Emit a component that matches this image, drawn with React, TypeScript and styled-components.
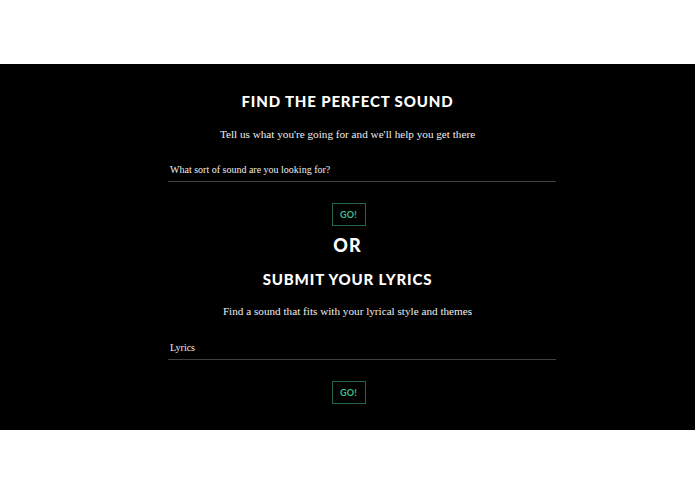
import React from "react";
import styled, { createGlobalStyle } from "styled-components";

const Global = createGlobalStyle`
  html, body { margin: 0; padding: 0; background: #fff; }
  body { width: 695px; height: 494px; overflow: hidden; }
`;

const Page = styled.div`
  padding-top: 64px;
  height: 494px;
  box-sizing: border-box;
`;

const Band = styled.section`
  background: #000;
  height: 366px;
  display: flex;
  flex-direction: column;
  align-items: center;
  padding-top: 28px;
  box-sizing: border-box;
`;

const Heading = styled.h2<{ $mt: number }>`
  margin: ${(p) => p.$mt}px 0 0;
  font-family: "Lato", "Open Sans", sans-serif;
  font-weight: 900;
  font-size: 15px;
  letter-spacing: 0.85px;
  line-height: 18px;
  color: #fff;
  height: 18px;
  display: flex;
  align-items: center;
`;

const Or = styled(Heading)`
  font-size: 18px;
  letter-spacing: 1px;
`;

const Sub = styled.p<{ $mt: number }>`
  margin: ${(p) => p.$mt}px 0 0;
  font-family: "Liberation Serif", "DejaVu Serif", serif;
  font-size: 11.2px;
  line-height: 14px;
  color: #eee;
`;

const Field = styled.div<{ $mt: number }>`
  margin-top: ${(p) => p.$mt}px;
  margin-left: 29px;
  width: 388px;
  border-bottom: 1px solid #404040;
  padding: 0 2px 5px;
  box-sizing: border-box;
  font-family: "Liberation Serif", "DejaVu Serif", serif;
  font-size: 10px;
  line-height: 12px;
  color: #eee;
`;

const Go = styled.button<{ $mt: number }>`
  margin-top: ${(p) => p.$mt}px;
  margin-left: 2px;
  width: 34px;
  height: 23px;
  background: #000;
  border: 1px solid #23664b;
  color: #3fbf88;
  font-family: "Lato", "Open Sans", sans-serif;
  font-weight: 700;
  font-size: 9px;
  letter-spacing: 0.3px;
  padding: 0;
  display: flex;
  align-items: center;
  justify-content: center;
`;

export default function App() {
  return (
    <>
      <Global />
      <Page>
        <Band>
          <Heading $mt={0}>FIND THE PERFECT SOUND</Heading>
          <Sub $mt={17}>Tell us what you're going for and we'll help you get there</Sub>
          <Field $mt={23}>What sort of sound are you looking for?</Field>
          <Go $mt={21}>GO!</Go>
          <Or $mt={10}>OR</Or>
          <Heading $mt={16}>SUBMIT YOUR LYRICS</Heading>
          <Sub $mt={16}>Find a sound that fits with your lyrical style and themes</Sub>
          <Field $mt={24}>Lyrics</Field>
          <Go $mt={21}>GO!</Go>
        </Band>
      </Page>
    </>
  );
}
